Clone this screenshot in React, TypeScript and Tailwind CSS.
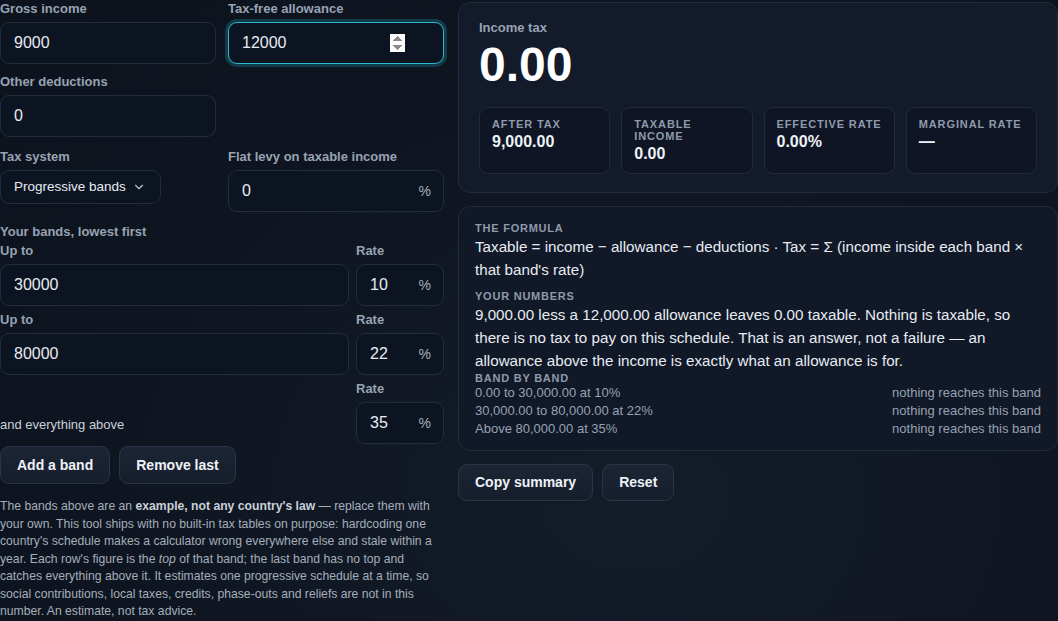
import React from 'react';
import { ChevronDown } from 'lucide-react';

const font = { fontFamily: '"Liberation Sans", Arial, sans-serif' };

function Label({ children, className = '' }: { children: React.ReactNode; className?: string }) {
  return <div className={`text-[13px] leading-4 font-bold text-[#97a2b3] ${className}`}>{children}</div>;
}

function Field({
  value,
  suffix,
  focused,
  className = '',
}: {
  value: string;
  suffix?: string;
  focused?: boolean;
  className?: string;
}) {
  return (
    <div className={`relative ${className}`}>
      <input
        type="number"
        defaultValue={value}
        autoFocus={focused}
        className={[
          'h-[42px] w-full rounded-[9px] border bg-[#0d1421] pl-[13px] pr-[38px] text-[16px] text-[#e6ebf2] outline-none',
          focused ? 'border-[#2fb6cc] shadow-[0_0_0_3px_rgba(34,160,185,0.28)]' : 'border-[#232c3c]',
        ].join(' ')}
        style={font}
      />
      {suffix && (
        <span className="pointer-events-none absolute right-[13px] top-1/2 -translate-y-1/2 text-[14px] text-[#a3adbb]">
          {suffix}
        </span>
      )}
    </div>
  );
}

function Stat({ label, value }: { label: React.ReactNode; value: string }) {
  return (
    <div className="h-[67px] rounded-[9px] border border-[#212a3b] bg-[#0f1524] px-[12px] pt-[10px]">
      <div className="text-[11px] leading-3 font-bold uppercase tracking-[0.08em] text-[#8f9aab]">{label}</div>
      <div className="mt-[2px] text-[16px] leading-5 font-bold text-[#eef2f7]">{value}</div>
    </div>
  );
}

function Btn({ children }: { children: React.ReactNode }) {
  return (
    <button className="rounded-[9px] border border-[#2a3446] bg-gradient-to-b from-[#1c2535] to-[#161e2c] px-[16px] text-[14px] font-bold text-[#eef2f7]">
      {children}
    </button>
  );
}

const bands = [
  { range: '0.00 to 30,000.00 at 10%' },
  { range: '30,000.00 to 80,000.00 at 22%' },
  { range: 'Above 80,000.00 at 35%' },
];

const caps = 'text-[11px] font-bold uppercase tracking-[0.07em] text-[#8f9aab]';

export default function App() {
  return (
    <div
      className="min-h-screen bg-[radial-gradient(ellipse_at_60%_80%,#141c29_0%,#0e1520_60%,#0d131d_100%)] text-[#e6ebf2]"
      style={font}
    >
      <div className="grid grid-cols-[444px_600px] gap-x-[14px]">
        {/* left column: inputs */}
        <div className="flex flex-col pt-[1px]">
          <div className="grid grid-cols-2 gap-x-3">
            <div>
              <Label className="mb-[5px]">Gross income</Label>
              <Field value="9000" />
            </div>
            <div>
              <Label className="mb-[5px]">Tax-free allowance</Label>
              <Field value="12000" focused />
            </div>
            <div className="mt-[10px]">
              <Label className="mb-[5px]">Other deductions</Label>
              <Field value="0" />
            </div>
          </div>

          <div className="mt-[12px] grid grid-cols-2 gap-x-3">
            <div>
              <Label className="mb-[5px]">Tax system</Label>
              <div className="flex h-[34px] w-[161px] items-center justify-between rounded-[9px] border border-[#232c3c] bg-[#0d1421] pl-[13px] pr-[14px] text-[13.5px] text-[#e6ebf2]">
                <span>Progressive bands</span>
                <ChevronDown size={14} strokeWidth={2} className="text-[#b8c1cd]" />
              </div>
            </div>
            <div>
              <Label className="mb-[5px]">Flat levy on taxable income</Label>
              <Field value="0" suffix="%" />
            </div>
          </div>

          <Label className="mt-[12px]">Your bands, lowest first</Label>
          <div className="mt-[3px] grid grid-cols-[1fr_88px] gap-x-[7px]">
            <div>
              <Label className="mb-[5px]">Up to</Label>
              <Field value="30000" />
            </div>
            <div>
              <Label className="mb-[5px]">Rate</Label>
              <Field value="10" suffix="%" />
            </div>
            <div className="mt-[6px]">
              <Label className="mb-[5px]">Up to</Label>
              <Field value="80000" />
            </div>
            <div className="mt-[6px]">
              <Label className="mb-[5px]">Rate</Label>
              <Field value="22" suffix="%" />
            </div>
            <div className="mt-[6px] flex h-[63px] items-end">
              <div className="flex h-[42px] items-center pt-[4px] text-[13px] text-[#c9d0da]">and everything above</div>
            </div>
            <div className="mt-[6px]">
              <Label className="mb-[5px]">Rate</Label>
              <Field value="35" suffix="%" />
            </div>
          </div>

          <div className="mt-[2px] flex h-[38px] gap-[9px]">
            <Btn>Add a band</Btn>
            <Btn>Remove last</Btn>
          </div>

          <p className="mt-[14px] text-[12.2px] leading-[17.5px] text-[#a4aebb]">
            The bands above are an <b className="text-[#c9d0da]">example, not any country's law</b> — replace them with
            your own. This tool ships with no built-in tax tables on purpose: hardcoding one country's schedule makes a
            calculator wrong everywhere else and stale within a year. Each row's figure is the <i>top</i> of that band;
            the last band has no top and catches everything above it. It estimates one progressive schedule at a time,
            so social contributions, local taxes, credits, phase-outs and reliefs are not in this number. An estimate,
            not tax advice.
          </p>
        </div>

        {/* right column: results */}
        <div className="mt-[2px] flex flex-col">
          <div className="rounded-[12px] border border-[#222b3c] bg-[#131a29] px-[20px] pt-[17px] pb-[18px]">
            <div className="text-[13px] leading-4 font-bold text-[#97a2b3]">Income tax</div>
            <div className="mt-[5px] text-[48px] leading-[48px] font-bold text-white">0.00</div>
            <div className="mt-[18px] grid grid-cols-4 gap-[11px]">
              <Stat label="After tax" value="9,000.00" />
              <Stat label={<>Taxable<br />income</>} value="0.00" />
              <Stat label="Effective rate" value="0.00%" />
              <Stat label="Marginal rate" value="—" />
            </div>
          </div>

          <div className="mt-[13px] rounded-[12px] border border-[#222b3c] bg-[#111827] px-[16px] pt-[14px] pb-[12px]">
            <div className={`${caps} leading-[14px]`}>The formula</div>
            <div className="text-[15.2px] leading-[23px] text-[#e6ebf2]">
              Taxable = income − allowance − deductions · Tax = Σ (income inside each band × that band's rate)
            </div>
            <div className={`${caps} mt-[8px] leading-[14px]`}>Your numbers</div>
            <div className="text-[15.2px] leading-[23px] text-[#e6ebf2]">
              9,000.00 less a 12,000.00 allowance leaves 0.00 taxable. Nothing is taxable, so there is no tax to pay on
              this schedule. That is an answer, not a failure — an allowance above the income is exactly what an
              allowance is for.
            </div>
            <div className={`${caps} leading-[12px]`}>Band by band</div>
            <div className="flex flex-col">
              {bands.map(b => (
                <div key={b.range} className="flex justify-between text-[13px] leading-[18px] text-[#97a2b3]">
                  <span>{b.range}</span>
                  <span>nothing reaches this band</span>
                </div>
              ))}
            </div>
          </div>

          <div className="mt-[13px] flex h-[37px] gap-[9px]">
            <Btn>Copy summary</Btn>
            <Btn>Reset</Btn>
          </div>
        </div>
      </div>
    </div>
  );
}
